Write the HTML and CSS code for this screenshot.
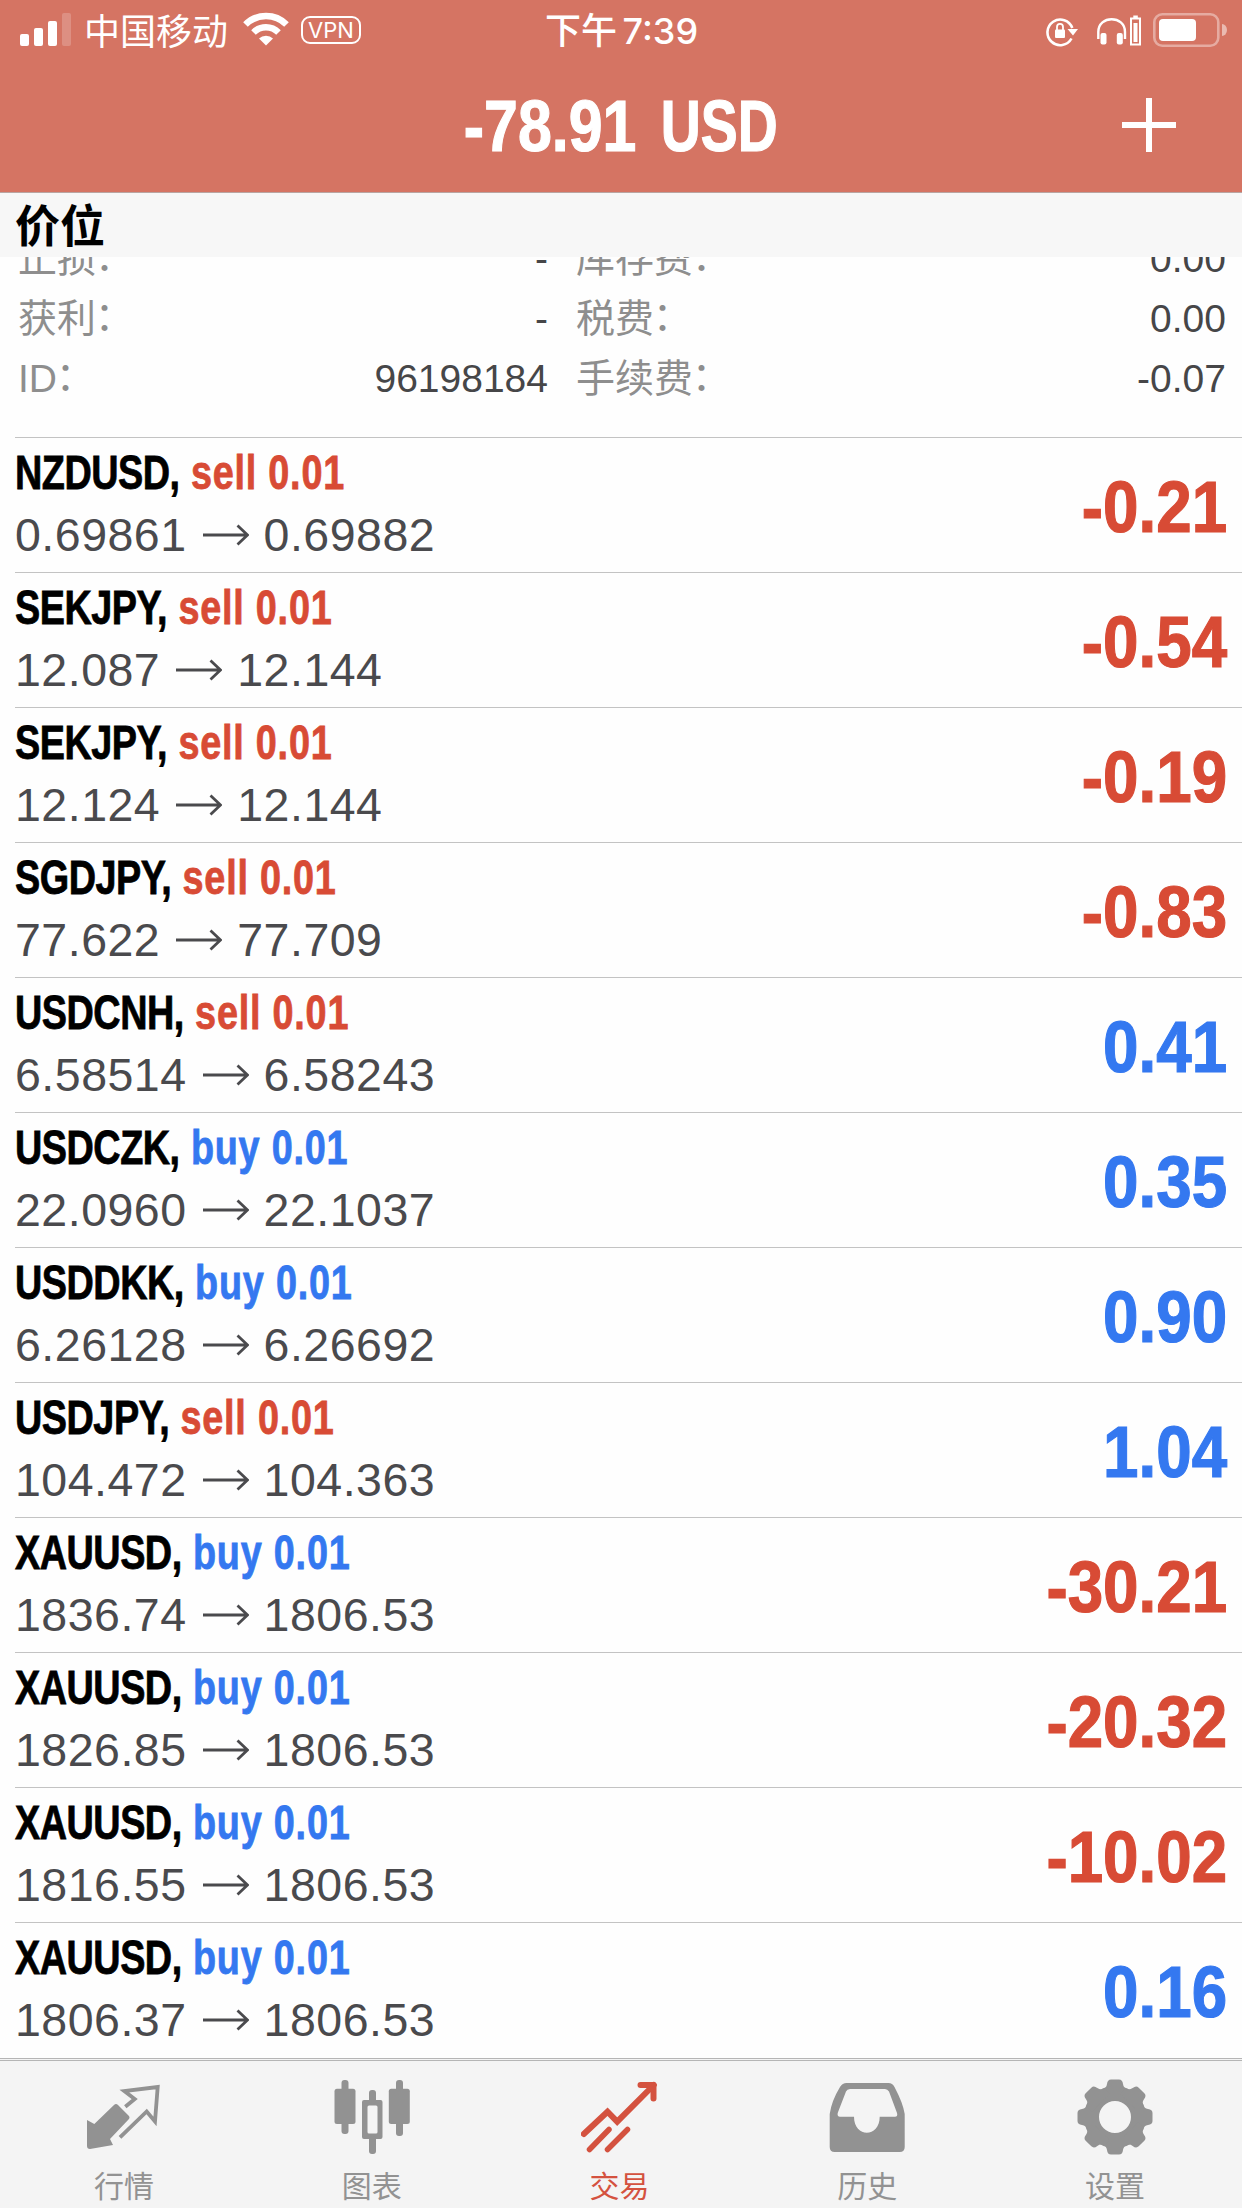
FILE: index.html
```html
<!DOCTYPE html>
<html lang="zh-CN">

<head>
    <meta charset="UTF-8" />
    <meta name="viewport" content="width=device-width, initial-scale=1.0" />
    <title>交易</title>
    <link rel="stylesheet" href="styles.css">
</head>

<body>
    <div class="app">
        <!-- Header -->
        <header class="header">
            <div class="status-bar">
                <div class="status-left">
                    <svg class="signal" width="52" height="33" viewBox="0 0 52 33" fill="#fff">
                        <rect x="0" y="21" width="9" height="12" rx="2" />
                        <rect x="14" y="15" width="9" height="18" rx="2" />
                        <rect x="28" y="8" width="9" height="25" rx="2" />
                        <rect x="42" y="0" width="9" height="33" rx="2" opacity="0.2" />
                    </svg>
                    <span class="carrier">中国移动</span>
                    <svg class="wifi" width="46" height="34" viewBox="0 0 46 34">
                        <path d="M2.5 12.5A29 29 0 0 1 43.5 12.5" fill="none" stroke="#fff" stroke-width="6.5" />
                        <path d="M10.5 20.5A17.7 17.7 0 0 1 35.5 20.5" fill="none" stroke="#fff" stroke-width="6.5" />
                        <path d="M23 33.5L16 26.5A10 10 0 0 1 30 26.5Z" fill="#fff" />
                    </svg>
                    <span class="vpn">VPN</span>
                </div>
                <div class="time">下午 7:39</div>
                <div class="status-right">
                    <svg class="lock" width="32" height="30" viewBox="0 0 32 30">
                        <path d="M25.5 21.5A12.8 12.8 0 1 1 26.3 11" fill="none" stroke="#fff" stroke-width="2.6" />
                        <path d="M21.5 12H32L27 18.5Z" fill="#fff" />
                        <rect x="9" y="12.5" width="10" height="8.5" rx="1" fill="#fff" />
                        <path d="M11 13V10a3 3.2 0 0 1 6 0V13" fill="none" stroke="#fff" stroke-width="1.8" />
                    </svg>
                    <svg class="headphones" width="45" height="32" viewBox="0 0 45 32">
                        <path d="M1.3 24V17C1.3 0 28 0 28 17V24" fill="none" stroke="#fff" stroke-width="2.4" />
                        <rect x="3.5" y="18" width="6" height="11.5" rx="2" fill="#fff" />
                        <rect x="19.8" y="18" width="6" height="11.5" rx="2" fill="#fff" />
                        <rect x="34" y="3.5" width="9" height="26" fill="none" stroke="#fff" stroke-width="2" />
                        <rect x="36.5" y="8" width="4" height="19" fill="#fff" />
                        <rect x="36.3" y="0.5" width="4.5" height="3" fill="#fff" />
                    </svg>
                    <svg class="battery" width="74" height="34" viewBox="0 0 74 34">
                        <rect x="1.3" y="1.3" width="64" height="31.4" rx="8" fill="none" stroke="#fff" stroke-width="2.6" opacity="0.4" />
                        <rect x="6" y="6" width="37" height="22" rx="4" fill="#fff" />
                        <path d="M69 11A5 6 0 0 1 69 23Z" fill="#fff" opacity="0.5" />
                    </svg>
                </div>
            </div>
            <div class="title-bar">
                <h1 class="title">-78.91 <span class="currency">USD</span></h1>
                <svg class="add" width="54" height="54" viewBox="0 0 54 54">
                    <path d="M27 0V54M0 27H54" stroke="#fff" stroke-width="6" />
                </svg>
            </div>
        </header>

        <div class="section-title">价位</div>

        <!-- Expanded position, scrolled under the section title -->
        <div class="details">
            <div class="detail-row">
                <span class="label">止损<i lang="zh-Hant">：</i></span><span class="value">-</span>
                <span class="label">库存费<i lang="zh-Hant">：</i></span><span class="value">0.00</span>
            </div>
            <div class="detail-row">
                <span class="label">获利<i lang="zh-Hant">：</i></span><span class="value">-</span>
                <span class="label">税费<i lang="zh-Hant">：</i></span><span class="value">0.00</span>
            </div>
            <div class="detail-row">
                <span class="label">ID<i lang="zh-Hant">：</i></span><span class="value">96198184</span>
                <span class="label">手续费<i lang="zh-Hant">：</i></span><span class="value">-0.07</span>
            </div>
        </div>

        <!-- Positions -->
        <svg class="defs" width="0" height="0">
            <symbol id="arrow" viewBox="0 0 46 22">
                <path d="M0 11H44M34.5 1.5L44.5 11L34.5 20.5" fill="none" stroke="#4a4a4d" stroke-width="2.8" />
            </symbol>
        </svg>
        <main class="positions">
            <div class="position">
                <div class="info">
                    <div class="name"><b>NZDUSD,</b> <span class="sell">sell 0.01</span></div>
                    <div class="price">0.69861<svg class="arrow"><use href="#arrow" /></svg>0.69882</div>
                </div>
                <div class="profit minus">-0.21</div>
            </div>
            <div class="position">
                <div class="info">
                    <div class="name"><b>SEKJPY,</b> <span class="sell">sell 0.01</span></div>
                    <div class="price">12.087<svg class="arrow"><use href="#arrow" /></svg>12.144</div>
                </div>
                <div class="profit minus">-0.54</div>
            </div>
            <div class="position">
                <div class="info">
                    <div class="name"><b>SEKJPY,</b> <span class="sell">sell 0.01</span></div>
                    <div class="price">12.124<svg class="arrow"><use href="#arrow" /></svg>12.144</div>
                </div>
                <div class="profit minus">-0.19</div>
            </div>
            <div class="position">
                <div class="info">
                    <div class="name"><b>SGDJPY,</b> <span class="sell">sell 0.01</span></div>
                    <div class="price">77.622<svg class="arrow"><use href="#arrow" /></svg>77.709</div>
                </div>
                <div class="profit minus">-0.83</div>
            </div>
            <div class="position">
                <div class="info">
                    <div class="name"><b>USDCNH,</b> <span class="sell">sell 0.01</span></div>
                    <div class="price">6.58514<svg class="arrow"><use href="#arrow" /></svg>6.58243</div>
                </div>
                <div class="profit plus">0.41</div>
            </div>
            <div class="position">
                <div class="info">
                    <div class="name"><b>USDCZK,</b> <span class="buy">buy 0.01</span></div>
                    <div class="price">22.0960<svg class="arrow"><use href="#arrow" /></svg>22.1037</div>
                </div>
                <div class="profit plus">0.35</div>
            </div>
            <div class="position">
                <div class="info">
                    <div class="name"><b>USDDKK,</b> <span class="buy">buy 0.01</span></div>
                    <div class="price">6.26128<svg class="arrow"><use href="#arrow" /></svg>6.26692</div>
                </div>
                <div class="profit plus">0.90</div>
            </div>
            <div class="position">
                <div class="info">
                    <div class="name"><b>USDJPY,</b> <span class="sell">sell 0.01</span></div>
                    <div class="price">104.472<svg class="arrow"><use href="#arrow" /></svg>104.363</div>
                </div>
                <div class="profit plus">1.04</div>
            </div>
            <div class="position">
                <div class="info">
                    <div class="name"><b>XAUUSD,</b> <span class="buy">buy 0.01</span></div>
                    <div class="price">1836.74<svg class="arrow"><use href="#arrow" /></svg>1806.53</div>
                </div>
                <div class="profit minus">-30.21</div>
            </div>
            <div class="position">
                <div class="info">
                    <div class="name"><b>XAUUSD,</b> <span class="buy">buy 0.01</span></div>
                    <div class="price">1826.85<svg class="arrow"><use href="#arrow" /></svg>1806.53</div>
                </div>
                <div class="profit minus">-20.32</div>
            </div>
            <div class="position">
                <div class="info">
                    <div class="name"><b>XAUUSD,</b> <span class="buy">buy 0.01</span></div>
                    <div class="price">1816.55<svg class="arrow"><use href="#arrow" /></svg>1806.53</div>
                </div>
                <div class="profit minus">-10.02</div>
            </div>
            <div class="position">
                <div class="info">
                    <div class="name"><b>XAUUSD,</b> <span class="buy">buy 0.01</span></div>
                    <div class="price">1806.37<svg class="arrow"><use href="#arrow" /></svg>1806.53</div>
                </div>
                <div class="profit plus">0.16</div>
            </div>
        </main>

        <!-- Tab bar -->
        <nav class="tab-bar">
            <div class="tab">
                <svg class="tab-icon" viewBox="0 0 76 76">
                    <path d="M1 41L8.3 45L28 26Q30 24 32 26L42.5 36.5Q44.5 38.5 42.5 40.5L24 60L27 66L4 70Q1 70 1 67Z" fill="currentColor" />
                    <path d="M39.3 27.7L48.7 20L38.3 12L71.7 8L69 42.5L60.7 32.5L34 58.3" fill="none" stroke="currentColor" stroke-width="3.8" />
                </svg>
                <span class="tab-label">行情</span>
            </div>
            <div class="tab">
                <svg class="tab-icon" viewBox="0 0 76 76" fill="currentColor">
                    <rect x="0.5" y="9.7" width="21" height="35.3" rx="2.5" />
                    <rect x="7.5" y="1" width="7" height="54" rx="3" />
                    <path fill-rule="evenodd" d="M30 21H46.5Q48.5 21 48.5 23V58Q48.5 60 46.5 60H30Q28 60 28 58V23Q28 21 30 21ZM35 26.5Q33.5 26.5 33.5 28V53Q33.5 54.5 35 54.5H42Q43.5 54.5 43.5 53V28Q43.5 26.5 42 26.5Z" />
                    <rect x="35" y="11" width="7" height="14" rx="3" />
                    <rect x="35" y="57" width="7" height="18" rx="3" />
                    <rect x="54.8" y="9.7" width="21" height="35.3" rx="2.5" />
                    <rect x="62" y="1" width="7" height="56" rx="3" />
                </svg>
                <span class="tab-label">图表</span>
            </div>
            <div class="tab active">
                <svg class="tab-icon" viewBox="0 0 76 76" fill="none" stroke="currentColor" stroke-width="6">
                    <path d="M2.8 55L26.5 32.7L36.2 42.7L72.8 6" stroke-linecap="round" />
                    <path d="M59.5 6H72.5V19.5" stroke-linecap="round" stroke-linejoin="round" />
                    <path d="M28 50.5L8.5 70.5M46.5 50.5L26.5 70.5" stroke-width="5.5" stroke-linecap="round" />
                </svg>
                <span class="tab-label">交易</span>
            </div>
            <div class="tab">
                <svg class="tab-icon" viewBox="0 0 76 76" fill="currentColor">
                    <path fill-rule="evenodd" d="M17.5 4H59.5Q63.5 4 65.5 8Q74 24 75.7 35V68Q75.7 73 70.7 73H5.7Q0.7 73 0.7 68V35Q2.5 22 11 8Q13.5 4 17.5 4ZM21 10Q18 10 17 12.5L8.7 34Q8 37.7 11 37.7H25C25 59 50.7 59 50.7 37.7H66Q69 37.7 68 34L60 12.5Q58.5 10 56 10Z" />
                </svg>
                <span class="tab-label">历史</span>
            </div>
            <div class="tab">
                <svg class="tab-icon" viewBox="-38 -38 76 76">
                    <defs>
                        <path id="tooth" d="M-13 -27Q-8.5 -29 -8 -33Q-7.5 -37.5 -4 -37.5H4Q7.5 -37.5 8 -33Q8.5 -29 13 -27V-20H-13Z" />
                    </defs>
                    <g fill="currentColor">
                        <circle r="23.5" fill="none" stroke="currentColor" stroke-width="15" />
                        <use href="#tooth" />
                        <use href="#tooth" transform="rotate(45)" />
                        <use href="#tooth" transform="rotate(90)" />
                        <use href="#tooth" transform="rotate(135)" />
                        <use href="#tooth" transform="rotate(180)" />
                        <use href="#tooth" transform="rotate(225)" />
                        <use href="#tooth" transform="rotate(270)" />
                        <use href="#tooth" transform="rotate(315)" />
                    </g>
                </svg>
                <span class="tab-label">设置</span>
            </div>
        </nav>
    </div>
</body>

</html>
```

FILE: styles.css
```css
* {
    box-sizing: border-box;
}

body {
    margin: 0;
    background: #fefefe;
    font-family: 'Liberation Sans', 'Noto Sans CJK SC', sans-serif;
}

.app {
    width: 1242px;
    height: 2208px;
    display: flex;
    flex-direction: column;
    overflow: hidden;
}

/* Header */
.header {
    height: 193px;
    background: #d57463;
    border-bottom: 1px solid #b9a5a2;
    color: white;
}

.status-bar {
    display: grid;
    grid-template-columns: 1fr auto 1fr;
    height: 60px;
    padding: 0 15px 0 20px;
}

.status-left {
    display: flex;
    align-items: flex-start;
}

.signal {
    margin-top: 13px;
}

.carrier {
    margin-left: 12px;
    width: 159px;
    font-size: 36px;
    line-height: 59px;
    font-family: 'Noto Sans CJK SC', sans-serif;
    white-space: nowrap;
}

.wifi {
    margin-top: 12px;
}

.vpn {
    margin: 16px 0 0 12px;
    width: 60px;
    height: 28px;
    border: 2px solid white;
    border-radius: 9px;
    font-family: Inter, sans-serif;
    font-size: 22px;
    line-height: 24px;
    text-align: center;
}

.time {
    margin-right: 4px;
    font-family: Inter, 'Noto Sans CJK SC', sans-serif;
    font-weight: 500;
    font-size: 36px;
    line-height: 62px;
    word-spacing: -4px;
    white-space: nowrap;
}

.status-right {
    display: flex;
    justify-content: flex-end;
    align-items: flex-start;
}

.lock {
    margin-top: 17px;
}

.headphones {
    margin: 15px 0 0 19px;
}

.battery {
    margin: 13px 0 0 11px;
}

.title-bar {
    display: grid;
    grid-template-columns: 1fr auto 1fr;
    height: 132px;
}

.title {
    grid-column: 2;
    margin: 0;
    font-size: 72px;
    line-height: 133px;
    word-spacing: 9px;
    transform: scaleX(0.845);
    -webkit-text-stroke: 1.2px white;
    white-space: nowrap;
}

.currency {
    display: inline-block;
    margin-right: -13px;
    transform: scaleX(0.91);
    transform-origin: left;
}

.add {
    justify-self: end;
    margin: 38px 66px 0 0;
}

.section-title {
    height: 64px;
    padding-left: 15px;
    background: #f7f7f7;
    color: black;
    font-family: 'Noto Sans CJK SC', sans-serif;
    font-weight: 700;
    font-size: 45px;
    line-height: 62px;
}

/* Expanded position */
.details {
    height: 180px;
    display: flex;
    flex-direction: column;
    justify-content: flex-end;
    padding: 0 16px 28px 18px;
    overflow: hidden;
}

.detail-row {
    flex: none;
    display: grid;
    grid-template-columns: 180px 350px 200px 1fr;
    height: 60px;
    font-size: 39px;
    line-height: 60px;
    white-space: nowrap;
}

.detail-row .label {
    color: #8e8e8e;
}

/* the Traditional face centres the colon in its cell */
.detail-row i {
    margin-left: -11px;
    font-family: 'Noto Sans CJK TC', sans-serif;
    font-style: normal;
    line-height: 0;
}

.detail-row .label:nth-child(3) {
    padding-left: 28px;
}

.detail-row .value {
    color: #464648;
    text-align: right;
}

/* Positions */
.defs {
    position: absolute;
}

.positions {
    flex: none;
    padding-left: 15px;
}

.position {
    display: flex;
    justify-content: space-between;
    height: 135px;
    border-top: 1px solid #c3c3c3;
}

.info {
    padding-top: 5px;
}

.name {
    height: 60px;
    font-size: 48px;
    line-height: 60px;
    font-weight: 700;
    letter-spacing: 1px;
    transform: scaleX(0.787);
    transform-origin: left;
    -webkit-text-stroke: 0.8px currentColor;
    white-space: nowrap;
    color: black;
}

.name b {
    letter-spacing: -0.6px;
}

.sell,
.minus {
    color: #d84b35;
}

.buy,
.plus {
    color: #3478f0;
}

.name span {
    -webkit-text-stroke-color: currentColor;
}

.price {
    display: flex;
    align-items: center;
    height: 64px;
    font-size: 46.5px;
    line-height: 65px;
    letter-spacing: 0.5px;
    color: #4a4a4d;
}

.arrow {
    width: 46px;
    height: 22px;
    margin: 0 15px 0 16px;
}

.profit {
    padding-right: 17px;
    font-size: 72px;
    line-height: 138px;
    font-weight: 700;
    transform: scaleX(0.885);
    transform-origin: right;
    -webkit-text-stroke: 1.2px currentColor;
}

/* Tab bar */
.tab-bar {
    flex: 1;
    display: flex;
    padding: 0 3px 0 0;
    margin-top: 1px;
    background: #f4f4f4;
    border-top: 3px double #b5b5b5;
    color: #929292;
}

.tab {
    flex: 1;
    display: flex;
    flex-direction: column;
    align-items: center;
    padding-top: 18px;
}

.tab-icon {
    width: 76px;
    height: 76px;
}

.tab-label {
    margin-top: 7px;
    font-family: 'Noto Sans CJK SC', sans-serif;
    font-size: 30px;
    line-height: 44px;
}

.tab.active {
    color: #d4523f;
}
```
